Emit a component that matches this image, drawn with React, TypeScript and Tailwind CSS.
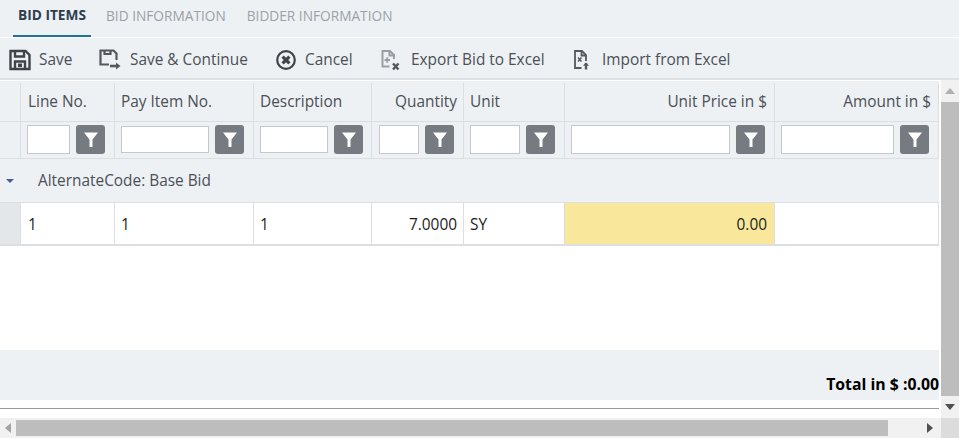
import React from 'react';

const font = { fontFamily: '"Open Sans", sans-serif' };

const FilterBox = ({ inputW, h = 'h-[29px]' }: { inputW: string; h?: string }) => (
  <div className="flex items-center gap-[6px] mb-[2px]">
    <div className={`${inputW} ${h} bg-white border border-[#c3c8cc]`} />
    <div className="w-[29px] h-[29px] rounded-[3px] bg-[#757b80] flex items-center justify-center">
      <svg width="14" height="15" viewBox="0 0 14 15">
        <path d="M0 0.500h14L8.500 7.500V15H5.500V7.500z" fill="#fff" />
      </svg>
    </div>
  </div>
);

const SaveIcon = () => (
  <svg width="22" height="22" viewBox="0 0 22 22" fill="none" stroke="#3f4449" strokeWidth="2.400">
    <path d="M1.500 2h15l4 4V20H1.500z" />
    <path d="M6 2v5.500h9V2" />
    <path d="M6 20v-7.500h10V20" />
    <rect x="9" y="14.500" width="4" height="3.500" fill="#3f4449" stroke="none" />
  </svg>
);

const SaveContinueIcon = () => (
  <svg width="22" height="22" viewBox="0 0 22 22" fill="none" stroke="#54595e" strokeWidth="2.200">
    <path d="M10 15.500H1.500V1.500h13l3 3v6.500" />
    <path d="M5.500 1.500v3.500h6V1.500" />
    <path d="M11 17h7" strokeWidth="2.600" />
    <path d="M17 13.500l4.500 3.500-4.500 3.500z" fill="#54595e" stroke="none" />
  </svg>
);

const CancelIcon = () => (
  <svg width="22" height="22" viewBox="0 0 22 22" fill="none" stroke="#3f4449">
    <circle cx="11" cy="11" r="8.800" strokeWidth="2.200" />
    <path d="M7.600 7.600l6.800 6.800M14.400 7.600l-6.800 6.800" strokeWidth="3.200" />
  </svg>
);

const ExportIcon = () => (
  <svg width="22" height="22" viewBox="0 0 22 22" fill="none" stroke="#9a9ea2" strokeWidth="2">
    <path d="M9.500 17.500H2.500V2h7.500l4 4v4" />
    <path d="M9.500 2v4.500H14" />
    <path d="M4.500 11h5.500M7.200 8.200v5.600" strokeWidth="1.800" />
    <path d="M13 14.500l5.500 6M18.500 14.500l-5.500 6" stroke="#54595e" strokeWidth="2.400" />
  </svg>
);

const ImportIcon = () => (
  <svg width="22" height="22" viewBox="0 0 22 22" fill="none" stroke="#54595e" strokeWidth="1.800">
    <path d="M9.500 19H3V2h7l4 4v6" />
    <path d="M9.500 2v4.500H14" />
    <path d="M6 8.500l3.500 4M9.500 8.500l-3.500 4" strokeWidth="1.500" />
    <path d="M14 14v6.500" strokeWidth="2.400" />
    <path d="M11 16.800l3-3.300 3 3.300z" fill="#54595e" stroke="none" />
  </svg>
);

const tools = [
  { label: 'Save', icon: <SaveIcon />, cls: 'ml-[9px] w-[90px] gap-[8px]' },
  { label: 'Save & Continue', icon: <SaveContinueIcon />, cls: 'w-[176px] gap-[9px]' },
  { label: 'Cancel', icon: <CancelIcon />, cls: 'w-[105px] gap-[8px]' },
  { label: 'Export Bid to Excel', icon: <ExportIcon />, cls: 'w-[192px] gap-[9px]' },
  { label: 'Import from Excel', icon: <ImportIcon />, cls: 'gap-[8px]' },
];

const cols = 'grid grid-cols-[21px_94px_139px_118px_92px_101px_210px_164px]';

export default function App() {
  return (
    <div className="w-[959px] h-[438px] overflow-hidden bg-white flex flex-col text-[15.4px] text-[#4a5056]" style={font}>
      {/* Tabs */}
      <div className="h-[37px] bg-[#eef1f4] flex items-end pl-[13px] text-[13.7px]">
        <div className="h-[35px] w-[78px] pb-[6px] border-b-2 border-[#1f7399] flex items-center justify-center font-bold text-[#2d3d50]">BID ITEMS</div>
        <div className="ml-[15px] h-[35px] pb-[6px] flex items-center text-[#9ba1a6]">BID INFORMATION</div>
        <div className="ml-[21px] h-[35px] pb-[6px] flex items-center text-[#9ba1a6]">BIDDER INFORMATION</div>
      </div>

      {/* Toolbar */}
      <div className="h-[42px] mt-px pt-[4px] bg-[#eef1f4] border-b-2 border-[#dfe2e5] flex items-center">
        {tools.map(t => (
          <div key={t.label} className={`flex items-center ${t.cls}`}>
            {t.icon}
            <span>{t.label}</span>
          </div>
        ))}
      </div>

      <div className="flex flex-1 min-h-0">
        <div className="flex-1 min-w-0 flex flex-col pt-[1px]">
          {/* Header row */}
          <div className={`${cols} h-[41px] pt-[2px] bg-[#eef1f4] border-b border-[#dcdfe2]`}>
            <div className="border-r border-[#dcdfe2]" />
            <div className="border-r border-[#dcdfe2] px-[7px] flex items-center">Line No.</div>
            <div className="border-r border-[#dcdfe2] px-[6px] flex items-center">Pay Item No.</div>
            <div className="border-r border-[#dcdfe2] px-[6px] flex items-center">Description</div>
            <div className="border-r border-[#dcdfe2] px-[6px] flex items-center justify-end">Quantity</div>
            <div className="border-r border-[#dcdfe2] px-[6px] flex items-center">Unit</div>
            <div className="border-r border-[#dcdfe2] px-[7px] flex items-center justify-end">Unit Price in $</div>
            <div className="border-r border-[#dcdfe2] px-[7px] flex items-center justify-end">Amount in $</div>
          </div>

          {/* Filter row */}
          <div className={`${cols} h-[37px] bg-[#eef1f4] border-b border-[#dcdfe2]`}>
            <div className="border-r border-[#dcdfe2]" />
            <div className="border-r border-[#dcdfe2] pl-[6px] flex items-center"><FilterBox inputW="w-[43px]" /></div>
            <div className="border-r border-[#dcdfe2] pl-[6px] flex items-center"><FilterBox inputW="w-[88px]" h="h-[27px]" /></div>
            <div className="border-r border-[#dcdfe2] pl-[6px] flex items-center"><FilterBox inputW="w-[68px]" h="h-[27px]" /></div>
            <div className="border-r border-[#dcdfe2] pl-[7px] flex items-center"><FilterBox inputW="w-[40px]" /></div>
            <div className="border-r border-[#dcdfe2] pl-[6px] flex items-center"><FilterBox inputW="w-[50px]" /></div>
            <div className="border-r border-[#dcdfe2] pl-[6px] flex items-center"><FilterBox inputW="w-[159px]" /></div>
            <div className="border-r border-[#dcdfe2] pl-[6px] flex items-center"><FilterBox inputW="w-[113px]" /></div>
          </div>

          {/* Group row */}
          <div className="h-[44px] bg-[#eef1f4] border-b border-[#dcdfe2] flex items-center">
            <svg width="10" height="6" viewBox="0 0 10 6" className="ml-[5px]"><path d="M1 1h8L5 5z" fill="#4a5a9a" /></svg>
            <span className="ml-[23px]">AlternateCode: Base Bid</span>
          </div>

          {/* Data row */}
          <div className={`${cols} h-[43px] pb-0 border-b-2 border-[#dcdfe2] text-[#1c1c1c]`}>
            <div className="bg-[#e3e7ea] border-r border-[#dcdfe2]" />
            <div className="border-r border-[#dcdfe2] px-[7px] pt-[2px] flex items-center">1</div>
            <div className="border-r border-[#dcdfe2] px-[6px] pt-[2px] flex items-center">1</div>
            <div className="border-r border-[#dcdfe2] px-[6px] pt-[2px] flex items-center">1</div>
            <div className="border-r border-[#dcdfe2] px-[6px] pt-[2px] flex items-center justify-end">7.0000</div>
            <div className="border-r border-[#dcdfe2] px-[6px] pt-[2px] flex items-center">SY</div>
            <div className="bg-[#f9e89b] border-r border-[#dcdfe2] px-[7px] pt-[2px] flex items-center justify-end">0.00</div>
            <div className="border-r border-[#dcdfe2]" />
          </div>

          <div className="h-[104px] shrink-0" />

          {/* Total */}
          <div className="h-[50px] bg-[#eef1f4] flex items-end justify-end pb-[3px] font-bold text-[15.8px] text-black whitespace-nowrap">
            Total in $ :0.00
          </div>
          <div className="h-[9px] border-b border-[#9a9a9a] shrink-0" />
        </div>

        {/* Vertical scrollbar */}
        <div className="w-[18px] ml-[2px] bg-[#f1f1f1] flex flex-col items-center">
          <div className="h-[22px] flex items-center justify-center">
            <svg width="10" height="6" viewBox="0 0 10 6"><path d="M0 6l5-6 5 6z" fill="#b0b0b0" /></svg>
          </div>
          <div className="w-full flex-1 bg-[#bdbdbd]" />
          <div className="h-[22px] flex items-center justify-center">
            <svg width="10" height="6" viewBox="0 0 10 6"><path d="M0 0h10L5 6z" fill="#505050" /></svg>
          </div>
        </div>
      </div>

      {/* Horizontal scrollbar */}
      <div className="h-[20px] shrink-0 flex bg-[#f1f1f1]">
        <div className="w-[16px] flex items-center justify-center">
          <svg width="6" height="10" viewBox="0 0 6 10"><path d="M6 0v10L0 5z" fill="#a3a3a3" /></svg>
        </div>
        <div className="w-[872px] bg-[#bdbdbd] my-[2px]" />
        <div className="w-[53px] flex items-center justify-end pr-[8px]">
          <svg width="6" height="10" viewBox="0 0 6 10"><path d="M0 0v10l6-5z" fill="#505050" /></svg>
        </div>
        <div className="flex-1 bg-[#dcdcdc]" />
      </div>
    </div>
  );
}
